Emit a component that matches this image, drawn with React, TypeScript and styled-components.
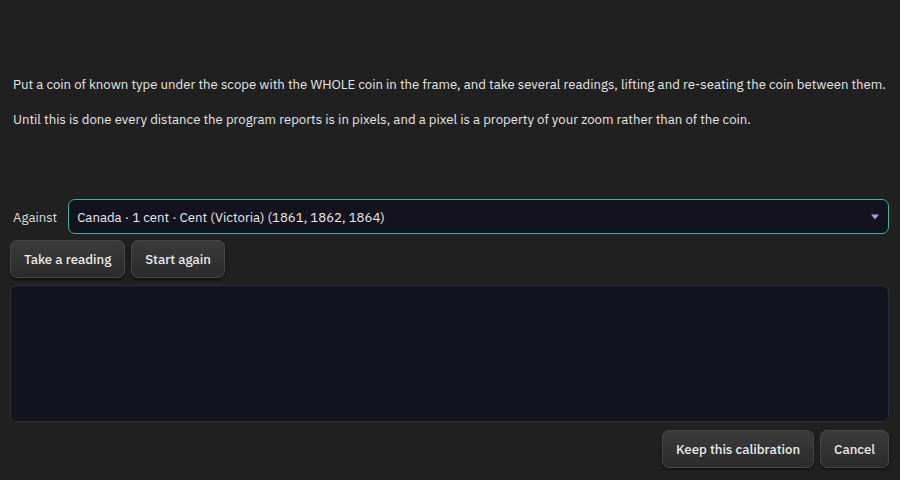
import styled, { createGlobalStyle } from "styled-components"

const Global = createGlobalStyle`
  html, body {
    margin: 0;
    padding: 0;
    background: #202020;
  }
  body {
    font-family: "IBM Plex Sans", Inter, "Noto Sans", sans-serif;
    color: #e4e4e4;
  }
`

const Page = styled.div`
  width: 900px;
  height: 480px;
  box-sizing: border-box;
  padding: 74px 11px 0 10px;
  display: flex;
  flex-direction: column;
`

const Intro = styled.p`
  margin: 0 0 15px 3px;
  font-size: 13.2px;
  line-height: 20px;
  color: #e6e6e6;
  white-space: nowrap;
`

const Field = styled.div`
  display: flex;
  align-items: center;
  gap: 11px;
  margin-top: 55px;
  padding-left: 3px;
`

const Label = styled.span`
  font-size: 13.2px;
  color: #dcdcdc;
`

const Select = styled.div`
  flex: 1;
  height: 35px;
  box-sizing: border-box;
  border: 1.5px solid #3db3a0;
  border-radius: 7px;
  background: #13121e;
  display: flex;
  align-items: center;
  justify-content: space-between;
  padding: 0 9px 0 8px;
  font-size: 13.2px;
  color: #ececec;
`

const Arrow = styled.svg`
  width: 8px;
  height: 6px;
`

const Row = styled.div<{ $end?: boolean }>`
  display: flex;
  flex-shrink: 0;
  gap: 6px;
  justify-content: ${p => (p.$end ? "flex-end" : "flex-start")};
  margin-top: ${p => (p.$end ? "8px" : "6px")};
`

const Button = styled.button`
  height: 38px;
  padding: 0 13px;
  border: 1px solid #474747;
  border-radius: 7px;
  background: linear-gradient(#3b3b3b, #2b2b2b);
  box-shadow: 0 2px 3px rgba(0, 0, 0, 0.45);
  color: #ececec;
  font-family: inherit;
  font-size: 13.2px;
  font-weight: 500;
  cursor: pointer;
`

const Log = styled.textarea`
  flex-shrink: 0;
  margin-top: 7px;
  height: 137px;
  box-sizing: border-box;
  resize: none;
  border: 1px solid #2c2c3a;
  border-radius: 7px;
  background: #13131f;
  color: #e4e4e4;
  font-family: inherit;
  font-size: 13px;
  outline: none;
`

const App: React.FC = () => {
  return (
    <Page>
      <Global />
      <Intro>
        Put a coin of known type under the scope with the WHOLE coin in the frame, and take several
        readings, lifting and re-seating the coin between them.
      </Intro>
      <Intro>
        Until this is done every distance the program reports is in pixels, and a pixel is a
        property of your zoom rather than of the coin.
      </Intro>
      <Field>
        <Label>Against</Label>
        <Select>
          <span>Canada · 1 cent · Cent (Victoria) (1861, 1862, 1864)</span>
          <Arrow viewBox="0 0 8 6">
            <path d="M0 0.5 L8 0.5 L4 5.5 Z" fill="#a59be0" />
          </Arrow>
        </Select>
      </Field>
      <Row>
        <Button>Take a reading</Button>
        <Button>Start again</Button>
      </Row>
      <Log readOnly />
      <Row $end>
        <Button>Keep this calibration</Button>
        <Button>Cancel</Button>
      </Row>
    </Page>
  )
}

export default App
